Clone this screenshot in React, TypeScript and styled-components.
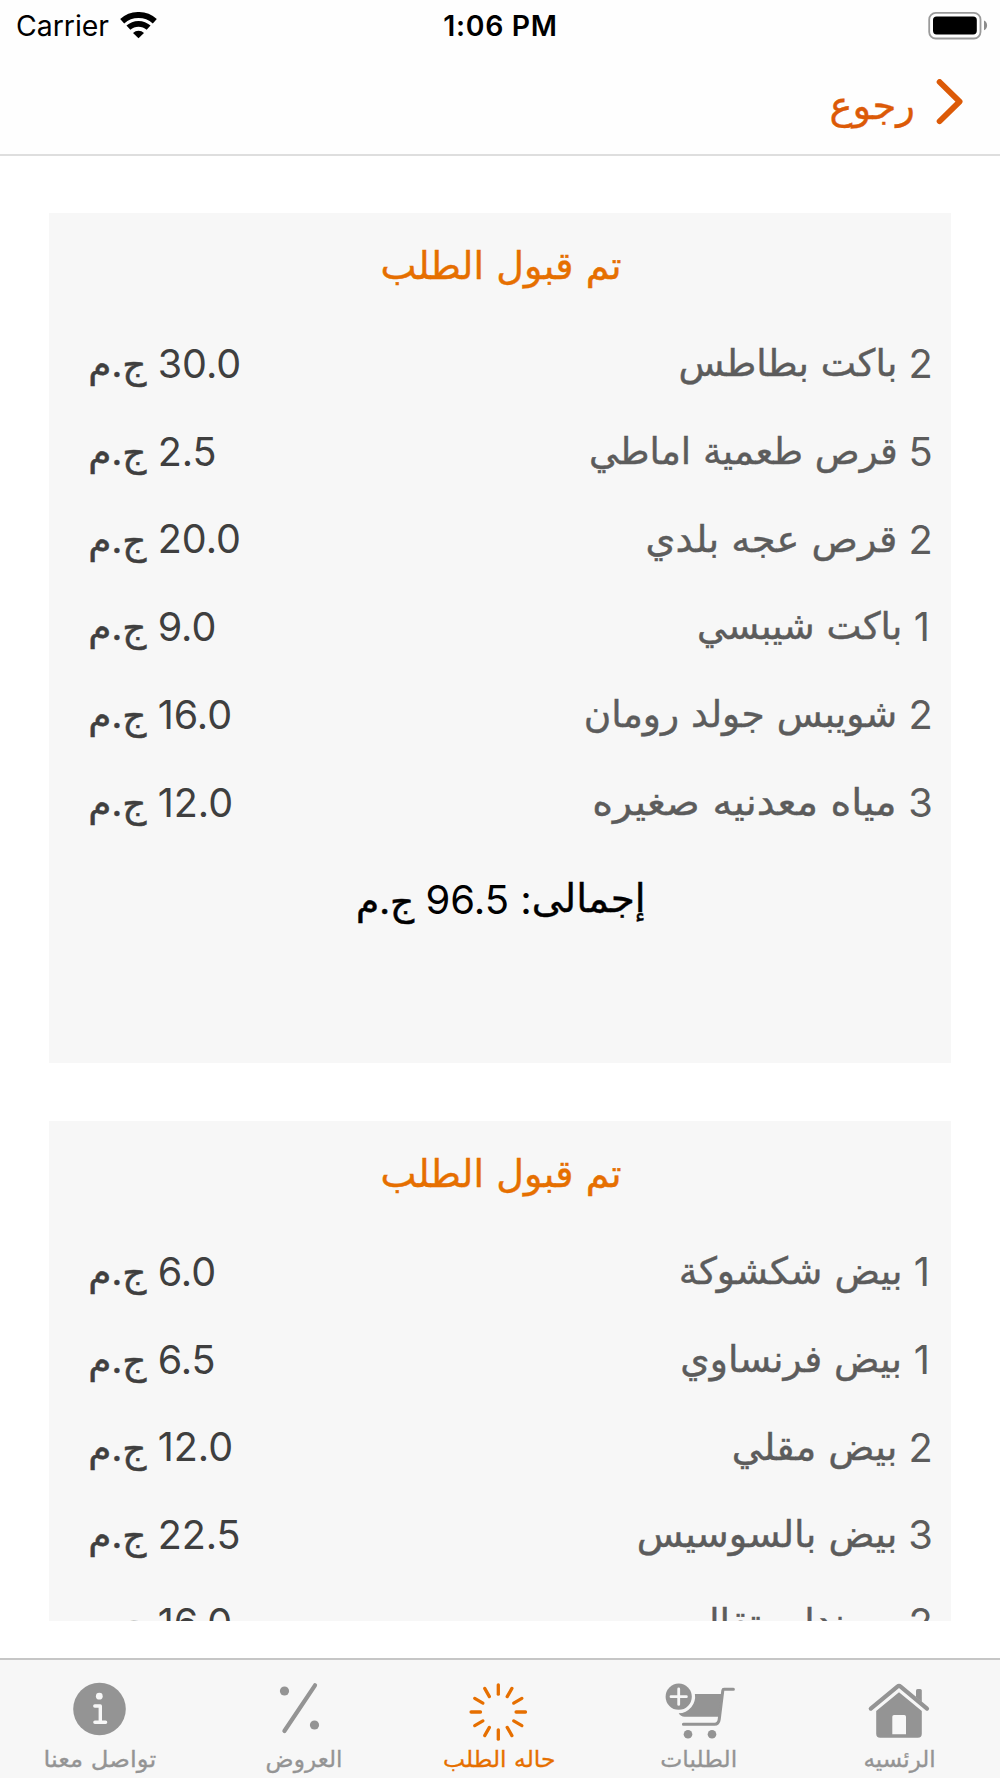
import React from 'react';
import styled, { createGlobalStyle } from 'styled-components';

const arabicFont = '"DejaVu Sans", sans-serif';
const mixedFont = 'Inter, "DejaVu Sans", sans-serif';

const GlobalStyle = createGlobalStyle`
  *, *::before, *::after { box-sizing: border-box; }
  body { margin: 0; background: #ffffff; font-family: ${mixedFont}; }
  svg { display: block; }
`;

const Screen = styled.div`
  display: flex;
  flex-direction: column;
  width: 1000px;
  height: 1778px;
  overflow: hidden;
  background: #ffffff;
`;

const Header = styled.header`
  display: flex;
  flex-direction: column;
  flex: none;
  height: 156px;
  background: #fefefe;
  border-bottom: 2px solid #dedede;
`;

const StatusBar = styled.div`
  display: grid;
  grid-template-columns: 1fr auto 1fr;
  align-items: center;
  height: 50px;
  padding: 0 12px 0 16px;
  color: #000000;
`;

const Carrier = styled.div`
  display: flex;
  align-items: center;
  gap: 11px;
  font-size: 28.4px;
  line-height: 50px;

  span {
    padding-top: 1px;
  }
`;

const Clock = styled.div`
  margin-right: 3px;
  padding-top: 1px;
  font-size: 28.4px;
  font-weight: 600;
  letter-spacing: 0.7px;
  line-height: 50px;
`;

const BatterySlot = styled.div`
  display: flex;
  justify-content: flex-end;
`;

const NavBar = styled.nav`
  display: flex;
  flex: 1;
  align-items: center;
  justify-content: flex-end;
  gap: 21px;
  padding: 0 36px 1px 0;
  color: #dc5a07;
`;

const BackLabel = styled.span`
  padding-top: 8px;
  font-family: ${arabicFont};
  font-size: 38.6px;
  line-height: 60px;
  -webkit-text-stroke: 0.4px currentColor;
`;

const Orders = styled.main`
  display: flex;
  flex-direction: column;
  flex: none;
  gap: 58px;
  height: 1465px;
  padding: 57px 48.6px 0;
  overflow: hidden;
`;

const Card = styled.section`
  flex: none;
  height: 850px;
  padding: 0 18.6px 0 39.7px;
  background: #f7f7f7;
  direction: rtl;
`;

const CardTitle = styled.h2`
  margin: 0 0 1px -19px;
  padding-top: 1px;
  font-family: ${arabicFont};
  font-size: 38.2px;
  font-weight: 400;
  line-height: 105px;
  text-align: center;
  color: #e66f00;
  -webkit-text-stroke: 0.4px currentColor;
`;

const ItemRow = styled.div`
  display: flex;
  justify-content: space-between;
  height: 87.8px;
  font-size: 39.8px;
  line-height: 87.8px;
  white-space: nowrap;
`;

const ItemName = styled.span<{ $inset: number }>`
  padding-right: ${(p) => p.$inset}px;
  color: #5c5c5c;
`;

const Price = styled.span`
  padding-top: 0.8px;
  color: #3f3f3f;
  font-size: 39.5px;
`;

const Total = styled.div`
  margin: 9.6px 0 0 -19.5px;
  font-size: 40px;
  line-height: 87.8px;
  text-align: center;
  color: #000000;
`;

const ArabicWord = styled.span<{ $stretch?: number; $size?: number }>`
  display: inline-block;
  font-family: ${arabicFont};
  font-size: ${(p) => p.$size ?? 37.5}px;
  line-height: 1;
  vertical-align: 2px;
  transform: scaleX(${(p) => p.$stretch ?? 1});
  transform-origin: right center;
  -webkit-text-stroke: 0.4px currentColor;
`;

const Currency = styled.span`
  display: inline-block;
  font-family: ${mixedFont};
  font-size: 37.5px;
  line-height: 1;
  letter-spacing: -0.5px;
  vertical-align: 0.8px;
  -webkit-text-stroke: 0.5px currentColor;
`;

const TabBar = styled.footer`
  display: grid;
  grid-template-columns: repeat(5, 1fr);
  flex: none;
  height: 120px;
  margin-top: 37px;
  border-top: 2px solid #c6c6c6;
  background: #f7f7f7;
`;

const Tab = styled.div<{ $active?: boolean }>`
  display: flex;
  flex-direction: column;
  align-items: center;
  padding-top: 20px;
  color: ${(p) => (p.$active ? '#e66f00' : '#949494')};
`;

const TabLabel = styled.span<{ $stretch: number; $shift: number }>`
  padding-top: 1px;
  font-family: ${arabicFont};
  font-size: 23px;
  line-height: 29.5px;
  white-space: nowrap;
  transform: translateX(${(p) => p.$shift}px) scaleX(${(p) => p.$stretch});
  -webkit-text-stroke: 0.3px currentColor;
`;

const WifiIcon = () => (
  <svg width="37" height="28" viewBox="0 0 37 28" fill="none" stroke="#000">
    <path d="M2.2 9.2 A24.5 24.5 0 0 1 34.8 9.2" strokeWidth="6" />
    <path d="M8.4 15.7 A15 15 0 0 1 28.6 15.7" strokeWidth="5.8" />
    <path d="M18.5 26.3 L13 20.9 A8.2 8.2 0 0 1 24 20.9 Z" fill="#000" stroke="none" />
  </svg>
);

const BatteryIcon = () => (
  <svg width="60" height="28" viewBox="0 0 60 28">
    <rect x="1.2" y="0.9" width="51.3" height="25.6" rx="6.6" fill="none" stroke="#9a9a9a" strokeWidth="1.8" />
    <rect x="5" y="4.4" width="43.8" height="18" rx="3.6" fill="#000" />
    <path d="M56 8.6 C60.1 10.4 60.1 16.4 56 18.2 Z" fill="#8c8c8c" />
  </svg>
);

const ChevronIcon = () => (
  <svg width="28" height="46" viewBox="0 0 28 46" fill="none">
    <path d="M3.6 3 L23.6 22.6 L3.6 42.2" stroke="currentColor" strokeWidth="5.8" strokeLinecap="round" strokeLinejoin="round" />
  </svg>
);

const TabSvg = ({ children }: { children: React.ReactNode }) => (
  <svg width="80" height="64" viewBox="0 0 80 64" fill="currentColor">
    {children}
  </svg>
);

const InfoIcon = () => (
  <TabSvg>
    <circle cx="39.5" cy="29" r="26.3" />
    <circle cx="39.3" cy="16.2" r="3.4" fill="#f7f7f7" />
    <path d="M34.8 26 H40.3 V42.2 M34.9 42.3 H45.6" fill="none" stroke="#f7f7f7" strokeWidth="3.4" strokeLinecap="round" strokeLinejoin="round" />
  </TabSvg>
);

const PercentIcon = () => (
  <TabSvg>
    <circle cx="24.5" cy="11" r="4.6" />
    <circle cx="54.5" cy="45" r="4.6" />
    <path d="M55 5.3 L24.4 51" stroke="currentColor" strokeWidth="4.2" strokeLinecap="round" />
  </TabSvg>
);

const SpinnerIcon = () => (
  <TabSvg>
    {Array.from({ length: 12 }, (_, i) => (
      <path
        key={i}
        d="M38.3 4.8 V14.2"
        stroke="currentColor"
        strokeWidth="3.3"
        strokeLinecap="round"
        transform={`rotate(${i * 30} 38.3 32)`}
      />
    ))}
  </TabSvg>
);

const CartIcon = () => (
  <TabSvg>
    <path d="M34.9 14 H62 L59.6 36.7 H24.5 C22 36.7 20 35.4 18.7 33.2 A16.5 16.5 0 0 0 34.9 14 Z" />
    <path d="M73.4 9.3 H64 C63.2 9.3 62.9 9.8 62.8 10.5 L59.2 39.5 C58.8 42.6 57.6 44.3 54.5 44.3 H23.4" fill="none" stroke="currentColor" strokeWidth="3" strokeLinecap="round" />
    <circle cx="18.7" cy="16.7" r="13.1" />
    <path d="M18.7 9 V24.4 M11 16.7 H26.4" stroke="#f7f7f7" strokeWidth="2.8" strokeLinecap="round" />
    <circle cx="28" cy="54.3" r="4.3" />
    <circle cx="52" cy="54.3" r="4.3" />
  </TabSvg>
);

const HomeIcon = () => (
  <TabSvg>
    <path d="M10.8 28.6 L37.4 6.6 Q39 5.3 40.6 6.6 L67 28.6" fill="none" stroke="currentColor" strokeWidth="4.2" strokeLinecap="round" />
    <path d="M56 17 V10.6 Q56 9 57.6 9 H60.2 Q61.8 9 61.8 10.6 V22 Z" />
    <path
      fillRule="evenodd"
      d="M39 12.2 L61.8 31 V53.7 Q61.8 57.7 57.8 57.7 H20.2 Q16.2 57.7 16.2 53.7 V31 Z M34 35 Q32.3 35 32.3 36.7 V54.3 H46 V36.7 Q46 35 44.3 35 Z"
    />
  </TabSvg>
);

type Item = { qty: number; name: string; price: string; stretch: number };

const orders: { total: string; items: Item[] }[] = [
  {
    total: '96.5',
    items: [
      { qty: 2, name: 'باكت بطاطس', price: '30.0', stretch: 1 },
      { qty: 5, name: 'قرص طعمية اماطي', price: '2.5', stretch: 0.99 },
      { qty: 2, name: 'قرص عجه بلدي', price: '20.0', stretch: 1.022 },
      { qty: 1, name: 'باكت شيبسي', price: '9.0', stretch: 0.99 },
      { qty: 2, name: 'شويبس جولد رومان', price: '16.0', stretch: 1.001 },
      { qty: 3, name: 'مياه معدنيه صغيره', price: '12.0', stretch: 1.058 },
    ],
  },
  {
    total: '63.0',
    items: [
      { qty: 1, name: 'بيض شكشوكة', price: '6.0', stretch: 1.006 },
      { qty: 1, name: 'بيض فرنساوي', price: '6.5', stretch: 1.003 },
      { qty: 2, name: 'بيض مقلي', price: '12.0', stretch: 1.02 },
      { qty: 3, name: 'بيض بالسوسيس', price: '22.5', stretch: 1.017 },
      { qty: 2, name: 'ميرندا برتقال', price: '16.0', stretch: 1.01 },
    ],
  },
];

const tabs = [
  { label: 'تواصل معنا', Icon: InfoIcon, stretch: 1.06, shift: -0.3 },
  { label: 'العروض', Icon: PercentIcon, stretch: 1.01, shift: 4 },
  { label: 'حاله الطلب', Icon: SpinnerIcon, stretch: 1.02, shift: -1 },
  { label: 'الطلبات', Icon: CartIcon, stretch: 1.02, shift: -1 },
  { label: 'الرئسيه', Icon: HomeIcon, stretch: 1, shift: -0.4 },
];

const activeTab = 'حاله الطلب';

export default function App() {
  return (
    <Screen>
      <GlobalStyle />
      <Header>
        <StatusBar>
          <Carrier>
            <span>Carrier</span>
            <WifiIcon />
          </Carrier>
          <Clock>1:06 PM</Clock>
          <BatterySlot>
            <BatteryIcon />
          </BatterySlot>
        </StatusBar>
        <NavBar>
          <BackLabel>رجوع</BackLabel>
          <ChevronIcon />
        </NavBar>
      </Header>

      <Orders>
        {orders.map((order) => (
          <Card key={order.total}>
            <CardTitle>تم قبول الطلب</CardTitle>
            {order.items.map((item) => (
              <ItemRow key={item.name}>
                <ItemName $inset={item.qty === 1 ? 3 : 0}>
                  {item.qty} <ArabicWord $stretch={item.stretch}>{item.name}</ArabicWord>
                </ItemName>
                <Price>
                  {item.price} <Currency>ج.م</Currency>
                </Price>
              </ItemRow>
            ))}
            {order.items.length > 5 && (
              <Total>
                <ArabicWord $size={39}>إجمالى</ArabicWord>: {order.total} <Currency>ج.م</Currency>
              </Total>
            )}
          </Card>
        ))}
      </Orders>

      <TabBar>
        {tabs.map(({ label, Icon, stretch, shift }) => (
          <Tab key={label} $active={label === activeTab}>
            <Icon />
            <TabLabel $stretch={stretch} $shift={shift}>
              {label}
            </TabLabel>
          </Tab>
        ))}
      </TabBar>
    </Screen>
  );
}
